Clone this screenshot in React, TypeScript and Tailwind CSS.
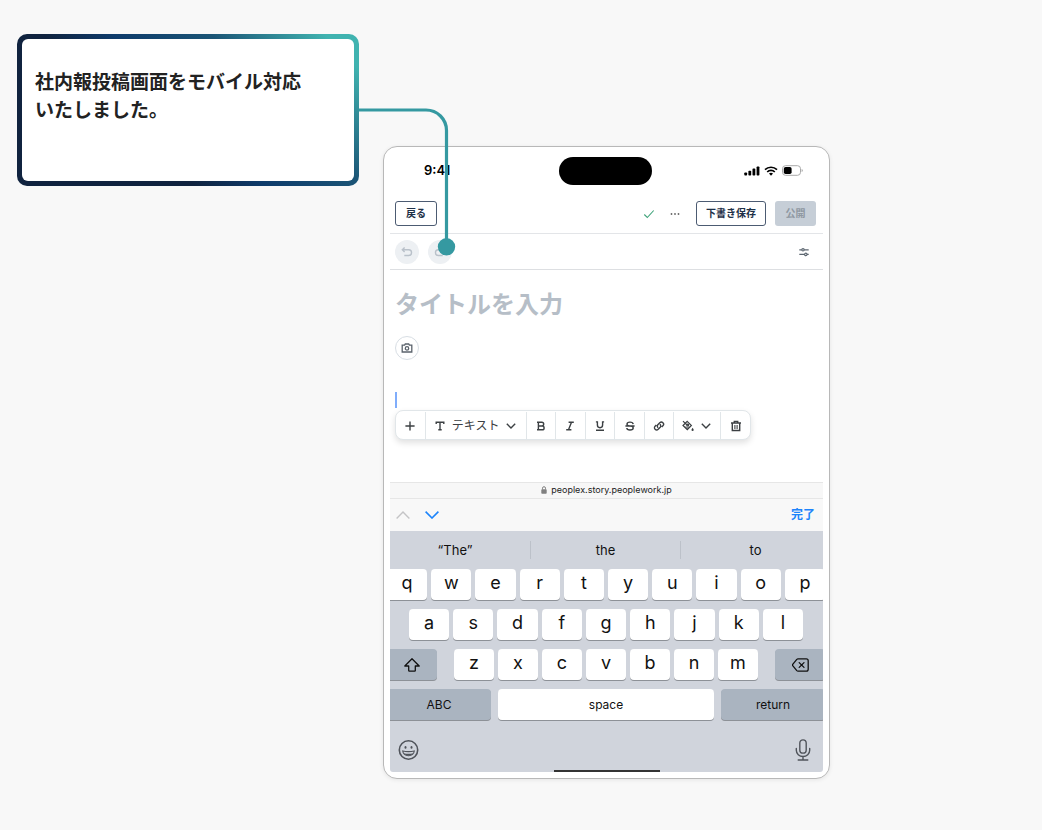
import { useState } from 'react'
import type { ReactNode } from 'react'

const ROW_TOP = ['q', 'w', 'e', 'r', 't', 'y', 'u', 'i', 'o', 'p']
const ROW_MIDDLE = ['a', 's', 'd', 'f', 'g', 'h', 'j', 'k', 'l']
const ROW_BOTTOM = ['z', 'x', 'c', 'v', 'b', 'n', 'm']
const SUGGESTIONS = ['“The”', 'the', 'to']

function Icon(props: { size?: string; weight?: number; children: ReactNode }) {
  return (
    <svg
      viewBox="0 0 12 12"
      className={props.size ?? 'size-3'}
      fill="none"
      stroke="currentColor"
      strokeWidth={props.weight ?? 1.4}
      aria-hidden="true"
    >
      {props.children}
    </svg>
  )
}

function Chevron() {
  return <Icon><path d="M1.8 3.8 6 8l4.2-4.2" /></Icon>
}

function Callout() {
  return (
    <section className="relative z-10 mt-[34px] min-h-[152px] w-full max-w-[342px] self-start rounded-[10px] bg-[linear-gradient(45deg,#10233f_0%,#10233f_36%,#0e3b6b_50%,#1b5576_70%,#40b3b0_93%)] p-[5px]">
      <div className="min-h-[142px] rounded-md bg-white px-[13px] pt-[30px]">
        <p className="text-[19px] leading-7 font-bold text-[#222]">
          社内報投稿画面をモバイル対応
          <br />
          いたしました。
        </p>
      </div>
      <svg viewBox="0 0 100 160" className="absolute top-[70px] left-full h-40 w-[100px]" fill="none" aria-hidden="true">
        <path d="M0 6H67a20.5 20.5 0 0 1 20.5 20.5V142" stroke="#3599a1" strokeWidth="3.2" />
        <circle cx="87.5" cy="142.8" r="8.7" fill="#3599a1" />
      </svg>
    </section>
  )
}

function StatusBar() {
  return (
    <div className="grid h-[47px] grid-cols-3 items-center pr-[26px] pl-6">
      <span className="pl-4 text-[13px] font-semibold text-black">9:41</span>
      <div className="h-7 w-[93px] justify-self-center rounded-full bg-black" />
      <div className="flex items-center gap-1 justify-self-end text-black">
        <svg viewBox="0 0 16 10" className="h-[10px] w-4" fill="currentColor" aria-hidden="true">
          <rect x="0.3" y="6.4" width="2.8" height="3.2" rx="0.8" />
          <rect x="4.4" y="4.8" width="2.8" height="4.8" rx="0.8" />
          <rect x="8.5" y="2.6" width="2.8" height="7" rx="0.8" />
          <rect x="12.6" y="0.4" width="2.8" height="9.2" rx="0.8" />
        </svg>
        <svg viewBox="0 0 14 10" className="h-[10px] w-[14px]" fill="none" stroke="currentColor" strokeWidth="1.7" aria-hidden="true">
          <path d="M1 3.7a8.6 8.6 0 0 1 12 0M3.2 6a5.4 5.4 0 0 1 7.6 0" />
          <path d="M5 7.6a2.9 2.9 0 0 1 4 0L7 9.7Z" fill="currentColor" stroke="none" />
        </svg>
        <svg viewBox="0 0 21 11" className="h-[11px] w-[21px]" aria-hidden="true">
          <rect x="0.5" y="0.7" width="18" height="9.6" rx="3" fill="none" stroke="#a9a9a9" />
          <rect x="1.8" y="2" width="7.8" height="7" rx="1.8" fill="currentColor" />
          <path d="M19.6 4v3c.9-.3 1.2-.9 1.2-1.5s-.3-1.2-1.2-1.500Z" fill="#a9a9a9" />
        </svg>
      </div>
    </div>
  )
}

function Header() {
  return (
    <header className="mx-[6px] flex h-10 items-center border-b border-[#e3e5e8] pr-[7px] pl-[5px] text-[10px] font-bold">
      <button className="h-[25px] w-[42px] rounded-[3px] border border-[#4c5b72] text-[#1e3047]">戻る</button>
      <span className="ml-auto text-[#3fa37a]">
        <Icon weight={1.1}><path d="m1.300 6.500 3 3 6.400-7" /></Icon>
      </span>
      <button aria-label="その他" className="mr-[15px] ml-[14px] text-[#666]">
        <Icon>
          <g fill="currentColor" stroke="none">
            <circle cx="2.500" cy="6" r="0.900" /><circle cx="6" cy="6" r="0.900" /><circle cx="9.500" cy="6" r="0.900" />
          </g>
        </Icon>
      </button>
      <button className="mr-[9px] h-[25px] w-[70px] rounded-[3px] border border-[#4c5b72] text-[#1e3047]">下書き保存</button>
      <button disabled className="h-[25px] w-[41px] rounded-[3px] bg-[#c6ced7] text-[#8f98a2]">公開</button>
    </header>
  )
}

function HistoryBar() {
  return (
    <div className="mx-[6px] flex h-9 items-center gap-[9px] border-b border-[#dddfe2] pr-[13px] pl-[5px]">
      <button aria-label="元に戻す" className="flex size-6 items-center justify-center rounded-full bg-[#edf0f3] text-[#b9c1ca]">
        <Icon><path d="M3.600 1.500 1.300 3.800l2.300 2.300M1.300 3.800h6.400a2.850 2.850 0 0 1 0 5.700H3.300" /></Icon>
      </button>
      <button aria-label="やり直す" className="flex size-6 items-center justify-center rounded-full bg-[#edf0f3] text-[#b9c1ca]">
        <Icon><path d="m8.400 1.500 2.300 2.300-2.300 2.300M10.700 3.800H4.300a2.850 2.850 0 0 0 0 5.700h4.400" /></Icon>
      </button>
      <button aria-label="設定" className="ml-auto text-[#5c6670]">
        <Icon weight={1.2}>
          <path d="M1.300 3.800h2.500M6.200 3.800h4.500M1.300 8.400h5.300M9 8.400h1.700" />
          <circle cx="5" cy="3.800" r="1.200" /><circle cx="7.800" cy="8.400" r="1.200" />
        </Icon>
      </button>
    </div>
  )
}

function Tool(props: { label: string; children: ReactNode }) {
  return (
    <button aria-label={props.label} className="flex flex-1 items-center justify-center">
      {props.children}
    </button>
  )
}

function FormatToolbar() {
  return (
    <div className="flex h-[30px] w-full max-w-[356px] divide-x divide-[#e1e6e9] rounded-lg border border-[#e1e6e9] bg-white pt-px text-[#3c4043] shadow-[0_3px_6px_rgba(0,0,0,.12)]">
      <Tool label="追加"><Icon><path d="M6 1.400v9.200M1.400 6h9.200" /></Icon></Tool>
      <button className="flex w-[101px] items-center justify-center gap-[6px] text-[12px]">
        <Icon><path d="M2.200 4V2.200h7.600V4M6 2.200v7.600M4.300 9.800h3.400" /></Icon>
        テキスト
        <Chevron />
      </button>
      <Tool label="太字">
        <Icon><path d="M2 2.200h4.800a1.900 1.900 0 0 1 0 3.800H3.400h3.800a1.900 1.900 0 0 1 0 3.800H2M3.400 2.200v7.600" /></Icon>
      </Tool>
      <Tool label="斜体"><Icon><path d="M4.600 2.200h5.200M2.200 9.800h5.200M7.500 2.200l-3 7.600" /></Icon></Tool>
      <Tool label="下線"><Icon><path d="M1.900 1.900h1.500v3.200a2.600 2.600 0 0 0 5.200 0V1.900h1.500M2 10.300h8" /></Icon></Tool>
      <Tool label="取り消し線">
        <Icon><path d="M9.200 4.200C9 2.700 7.800 2.100 6 2.100S3 2.900 3 4.200 4.200 6 6 6c2 0 3.200.7 3.200 2S7.900 10 6 10 2.900 9.300 2.800 8M1.400 6h9.200" /></Icon>
      </Tool>
      <Tool label="リンク">
        <Icon><path d="M5.100 7.700a2.100 2.100 0 0 1-.3-3l2-2a2.150 2.150 0 0 1 3.100 3.100L8.700 7M6.900 4.300a2.100 2.100 0 0 1 .3 3l-2 2A2.150 2.150 0 0 1 2.100 6.200L3.300 5" /></Icon>
      </Tool>
      <button aria-label="背景色" className="flex w-[47px] items-center justify-center gap-[6px]">
        <Icon weight={1.2}>
          <path d="M1 1.200 3 3.200M5.200 1.300 9.400 5.500 5.300 9.700 1 5.500Z" />
          <path d="M3 3.200 5.600 5.300" />
          <circle cx="5.700" cy="5.100" r="0.900" />
          <path d="m1.800 6.400 3.500 3.400 3.500-3.400Z" fill="currentColor" stroke="none" opacity="0.6" />
          <path d="M10.600 7.800c.7 1 1.100 1.600 1.100 2.200a1.100 1.100 0 0 1-2.200 0c0-.6.400-1.200 1.100-2.200Z" fill="currentColor" stroke="none" />
        </Icon>
        <Chevron />
      </button>
      <Tool label="削除">
        <Icon>
          <path d="M1 3h10M4.300 2.900V1.400h3.400v1.500M2.300 3v7.500h7.400V3" />
          <path d="M4.900 5v4M7.100 5v4" strokeWidth="1.100" />
        </Icon>
      </Tool>
    </div>
  )
}

function Editor() {
  return (
    <div className="mx-[6px] h-[212px] px-[5px] pt-4">
      <input
        aria-label="タイトル"
        placeholder="タイトルを入力"
        className="block h-9 w-full bg-transparent text-2xl font-bold outline-none placeholder:text-[#b6bec7]"
      />
      <button aria-label="画像を追加" className="mt-[14px] flex size-6 items-center justify-center rounded-full border border-[#d8dee4] text-[#5b636c]">
        <Icon weight={1.3}>
          <path d="M1.200 3.200h2.400l.7-1.200h3.400l.7 1.200h2.400V10H1.200Z" />
          <circle cx="6" cy="6.400" r="1.700" />
        </Icon>
      </button>
      <textarea aria-label="本文" rows={1} className="mt-8 mb-[2px] block h-4 w-full resize-none overflow-hidden border-l-2 border-[#80adfb] text-xs outline-none" />
      <FormatToolbar />
    </div>
  )
}

function Key(props: { label: string; className?: string; children?: ReactNode }) {
  return (
    <button
      aria-label={props.label}
      className={`flex h-[31px] items-center justify-center rounded shadow-[0_1px_0_#8d9197] ${props.className ?? 'flex-1 bg-white pb-[3px] text-lg'}`}
    >
      {props.children ?? props.label}
    </button>
  )
}

function Keyboard() {
  const [shift, setShift] = useState(false)
  const show = (k: string) => (shift ? k.toUpperCase() : k)

  return (
    <div className="overflow-hidden rounded-b-[3px] bg-[#d0d4dc] text-[#111]">
      <div className="-mr-[7px] -ml-[10px] grid h-[38px] grid-cols-3 items-center text-[13px]">
        {SUGGESTIONS.map((word, i) => (
          <button key={word} className={`h-[18px] leading-[18px] ${i > 0 ? 'border-l border-[#bcc1c9]' : ''}`}>
            {word}
          </button>
        ))}
      </div>
      <div className="-mr-[2px] -ml-[3px] flex flex-col gap-[9px]">
        <div className="flex gap-1">
          {ROW_TOP.map(k => <Key key={k} label={show(k)} />)}
        </div>
        <div className="flex gap-1 px-[22px]">
          {ROW_MIDDLE.map(k => <Key key={k} label={show(k)} />)}
        </div>
        <div className="flex gap-[17px]">
          <div className="flex" onClick={() => setShift(s => !s)}>
            <Key label="シフト" className="w-[50px] bg-[#aab4c0]">
              <svg viewBox="0 0 16 14" className="h-[14px] w-4" fill="none" stroke="currentColor" strokeWidth="1.300" strokeLinejoin="round" aria-hidden="true">
                <path d="M8 .8 15.200 8H11.300v4.500q0 .7-.7.700H5.400q-.7 0-.7-.700V8H.8Z" />
              </svg>
            </Key>
          </div>
          <div className="flex flex-1 gap-1">
            {ROW_BOTTOM.map(k => <Key key={k} label={show(k)} />)}
          </div>
          <Key label="削除" className="w-[50px] bg-[#aab4c0]">
            <svg viewBox="0 0 17 14" className="h-[14px] w-[17px]" fill="none" stroke="currentColor" strokeWidth="1.300" strokeLinejoin="round" strokeLinecap="round" aria-hidden="true">
              <path d="M6 .9h8.300q1.900 0 1.900 1.900v8.400q0 1.900-1.900 1.900H6q-.7 0-1.200-.5L.9 7.900q-.7-.9 0-1.800L4.800 1.400Q5.300.9 6 .9Z" />
              <path d="m7.200 4.600 4.800 4.800M12 4.600 7.200 9.400" />
            </svg>
          </Key>
        </div>
        <div className="flex gap-[7px] text-xs">
          <Key label="ABC" className="w-[104px] bg-[#aab4c0]" />
          <Key label="space" className="flex-1 bg-white" />
          <Key label="return" className="w-[104px] bg-[#aab4c0]" />
        </div>
      </div>
      <div className="mt-[19px] flex items-center justify-between px-2 text-[#50545b]">
        <button aria-label="絵文字">
          <svg viewBox="0 0 22 22" className="size-[22px]" fill="none" stroke="currentColor" strokeWidth="1.600" aria-hidden="true">
            <circle cx="10.500" cy="11" r="9.200" />
            <ellipse cx="7.500" cy="8.400" rx="1" ry="1.400" fill="currentColor" stroke="none" />
            <ellipse cx="13.500" cy="8.400" rx="1" ry="1.400" fill="currentColor" stroke="none" />
            <path d="M4.700 12q5.800 1.300 11.600 0-.600 4.600-5.800 4.700-5.200-.100-5.800-4.700Z" strokeWidth="1.100" />
            <path d="M5.700 14.200q4.800 1 9.600 0-1.600 2.400-4.800 2.400t-4.800-2.400Z" fill="currentColor" stroke="none" />
          </svg>
        </button>
        <button aria-label="音声入力" className="mr-1">
          <svg viewBox="0 0 16 22" className="h-[22px] w-4" fill="none" stroke="currentColor" strokeWidth="1.400" strokeLinecap="round" aria-hidden="true">
            <rect x="4.800" y="0.900" width="6.400" height="13.200" rx="3.200" />
            <path d="M1.300 9.500v1.800a6.700 6.200 0 0 0 13.400 0V9.500M8 17.500v3.400M3.200 21h9.600" />
          </svg>
        </button>
      </div>
      <div className="mx-auto mt-[9px] h-[2px] w-[106px] bg-[#333]" />
    </div>
  )
}

function Phone() {
  return (
    <section className="mt-[146px] w-full max-w-[447px] self-start rounded-[14px] border border-[#b8b8b8] bg-white pb-[6px] shadow-[0_1px_4px_rgba(0,0,0,.08)]">
      <StatusBar />
      <Header />
      <HistoryBar />
      <Editor />
      <div className="mx-[6px]">
        <div className="flex h-[17px] items-center justify-center gap-1 border-y border-[#e6e6e6] bg-[#f7f7f7] pb-[2px] text-[9px] text-[#222]">
          <svg viewBox="0 0 6 8" className="h-2 w-[6px] text-[#808080]" fill="none" stroke="currentColor" aria-hidden="true">
            <rect x="0.300" y="3.300" width="5.400" height="4.400" rx="0.800" fill="currentColor" stroke="none" />
            <path d="M1.500 3.500V2.200a1.500 1.500 0 0 1 3 0v1.300" />
          </svg>
          peoplex.story.peoplework.jp
        </div>
        <div className="flex h-8 items-center bg-[#f8f8f8] pr-2 pl-[6px]">
          <button aria-label="前へ" className="mr-[15px] text-[#c4c4c6]">
            <svg viewBox="0 0 14 8" className="h-2 w-[14px]" fill="none" stroke="currentColor" strokeWidth="1.400" aria-hidden="true"><path d="m.6 7.400 6.400-6.400 6.400 6.400" /></svg>
          </button>
          <button aria-label="次へ" className="text-[#1d84fb]">
            <svg viewBox="0 0 14 8" className="h-2 w-[14px]" fill="none" stroke="currentColor" strokeWidth="1.600" aria-hidden="true"><path d="m.6.6 6.400 6.400L13.400.6" /></svg>
          </button>
          <button className="ml-auto text-xs font-bold text-[#1d84fb]">完了</button>
        </div>
        <Keyboard />
      </div>
    </section>
  )
}

export default function App() {
  return (
    <main lang="ja" className="flex min-h-screen gap-6 bg-[#f8f8f8] pl-[17px] font-['Inter','Noto_Sans_CJK_JP',sans-serif]">
      <Callout />
      <Phone />
    </main>
  )
}
